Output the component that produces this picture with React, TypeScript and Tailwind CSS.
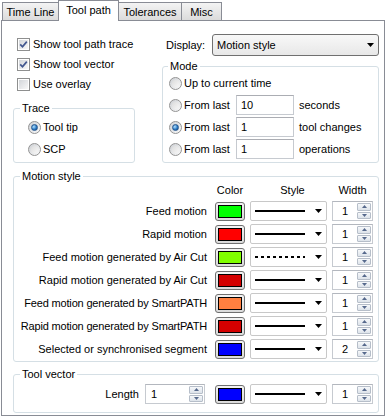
import React from 'react'

const rows = [
  { label: 'Feed motion', swatch: 'bg-[#00ff00]', dashed: false, width: '1', tight: false },
  { label: 'Rapid motion', swatch: 'bg-[#ff0000]', dashed: false, width: '1', tight: false },
  { label: 'Feed motion generated by Air Cut', swatch: 'bg-[#80ff00]', dashed: true, width: '1', tight: false },
  { label: 'Rapid motion generated by Air Cut', swatch: 'bg-[#d40000]', dashed: false, width: '1', tight: false },
  { label: 'Feed motion generated by SmartPATH', swatch: 'bg-[#ff8040]', dashed: false, width: '1', tight: true },
  { label: 'Rapid motion generated by SmartPATH', swatch: 'bg-[#d40000]', dashed: false, width: '1', tight: true },
  { label: 'Selected or synchronised segment', swatch: 'bg-[#0000ff]', dashed: false, width: '2', tight: false },
]

function Arrow() {
  return (
    <svg width="7" height="4" viewBox="0 0 7 4" className="ml-auto">
      <path d="M0 0h7L3.5 4z" fill="#000" />
    </svg>
  )
}

function Check({ checked }: { checked?: boolean }) {
  return (
    <span className="flex h-[13px] w-[13px] shrink-0 border border-[#8e8f8f] bg-white p-[1px]">
      <span className="flex h-full w-full items-center justify-center bg-linear-to-br from-[#d3d6da] to-[#f8f8f8]">
        {checked && (
          <svg width="9" height="9" viewBox="0 0 9 9">
            <path d="M1.2 4.4L3.5 6.8L7.8 1.6" fill="none" stroke="#42578f" strokeWidth="1.7" />
          </svg>
        )}
      </span>
    </span>
  )
}

function Radio({ on }: { on?: boolean }) {
  return (
    <span className="flex h-[13px] w-[13px] shrink-0 items-center justify-center rounded-full border border-[#939393] bg-linear-to-br from-[#cdd0d4] to-[#fbfbfb]">
      {on ? (
        <span className="h-[7px] w-[7px] rounded-full border border-[#25578f] bg-[radial-gradient(circle_at_35%_35%,#b4e2ff,#2c7cc6_55%,#113c73)]" />
      ) : (
        <span className="h-[7px] w-[7px] rounded-full bg-linear-to-br from-[#dcdcdc] to-[#f7f7f7]" />
      )}
    </span>
  )
}

function SpinBtn({ up }: { up?: boolean }) {
  return (
    <span className="flex flex-1 items-center justify-center rounded-[1px] border border-[#b6bec9] bg-linear-to-b from-[#f6f8fa] to-[#dde3ea]">
      <svg width="5" height="3" viewBox="0 0 5 3">
        <path d={up ? 'M0 3h5L2.5 0z' : 'M0 0h5L2.5 3z'} fill="#56698c" />
      </svg>
    </span>
  )
}

function Spin({ value, left }: { value: string; left?: boolean }) {
  return (
    <div className="flex h-[20px] w-full border border-[#c6cad0] border-t-[#b3b7be] bg-white">
      <div className={left ? 'flex flex-1 items-center pl-[5px]' : 'flex flex-1 items-center justify-center'}>{value}</div>
      <div className="mr-[1px] flex w-[14px] flex-col gap-[1px] py-[1px]">
        <SpinBtn up />
        <SpinBtn />
      </div>
    </div>
  )
}

function ColorBtn({ swatch }: { swatch: string }) {
  return (
    <div className="flex h-[19px] rounded-[3px] border border-[#707070] bg-linear-to-b from-[#f3f3f3] to-[#dadada] p-[2px]">
      <div className={'h-full w-full border border-black ' + swatch} />
    </div>
  )
}

function StyleCombo({ dashed }: { dashed?: boolean }) {
  return (
    <div className="flex h-[20px] items-center rounded-[2px] border border-[#c8c8c8] bg-white px-[4px]">
      <svg width="50" height="2" viewBox="0 0 50 2">
        <line x1="0" y1="1" x2="50" y2="1" stroke="#000" strokeWidth="2" strokeDasharray={dashed ? '3 3' : undefined} />
      </svg>
      <Arrow />
    </div>
  )
}

function TextBox({ value }: { value: string }) {
  return (
    <div className="flex h-[20px] w-[58px] items-center border border-[#c6cad0] border-t-[#abadb3] bg-white pl-[4px]">
      {value}
    </div>
  )
}

export default function App() {
  return (
    <div className="h-[418px] w-[386px] overflow-hidden bg-white font-['Liberation_Sans',Arial,sans-serif] text-[11px] leading-[13px] text-black">
      <div className="flex h-[20px] items-end pl-[2px]">
        <div className="flex h-[18px] w-[57px] items-center justify-center border border-b-0 border-[#898c95] bg-linear-to-b from-[#f4f4f4] to-[#dbdbdb] pt-[1px]">
          Time Line
        </div>
        <div className="relative z-10 -mb-px -ml-px flex h-[21px] w-[61px] items-center justify-center border border-b-0 border-[#898c95] bg-white pb-[2px]">
          Tool path
        </div>
        <div className="-ml-px flex h-[18px] w-[64px] items-center justify-center border border-b-0 border-[#898c95] bg-linear-to-b from-[#f4f4f4] to-[#dbdbdb] pt-[1px]">
          Tolerances
        </div>
        <div className="-ml-px flex h-[18px] w-[41px] items-center justify-center border border-b-0 border-[#898c95] bg-linear-to-b from-[#f4f4f4] to-[#dbdbdb] pt-[1px]">
          Misc
        </div>
      </div>

      <div className="ml-px box-border h-[396px] w-[384px] border border-[#898c95] bg-white pl-[11px] pr-[5px] pt-[13px]">
        <div className="flex items-start gap-[27px]">
          {/* left column */}
          <div className="w-[122px]">
            <div className="flex h-[20px] items-center gap-[3px] pl-[4px]">
              <Check checked />
              <span>Show tool path trace</span>
            </div>
            <div className="flex h-[20px] items-center gap-[3px] pl-[4px]">
              <Check checked />
              <span>Show tool vector</span>
            </div>
            <div className="flex h-[20px] items-center gap-[3px] pl-[4px]">
              <Check />
              <span>Use overlay</span>
            </div>
            <fieldset className="mt-[8px] rounded-[3px] border border-[#d5dfe5] pb-[2px] pl-[6px]">
              <legend className="px-[2px] leading-[13px]">Trace</legend>
              <div className="pl-[8px] pt-[1px]">
                <div className="flex h-[22px] items-center gap-[2px]">
                  <Radio on />
                  <span>Tool tip</span>
                </div>
                <div className="flex h-[22px] items-center gap-[2px]">
                  <Radio />
                  <span>SCP</span>
                </div>
              </div>
            </fieldset>
          </div>

          {/* right column */}
          <div className="flex-1">
            <div className="flex h-[22px] items-center">
              <span className="pl-[4px]">Display:</span>
              <div className="ml-auto flex h-[22px] w-[167px] items-center rounded-[3px] border border-[#707070] bg-linear-to-b from-[#f8f8f8] to-[#e8e8e8] pl-[4px] pr-[4px]">
                <span>Motion style</span>
                <Arrow />
              </div>
            </div>
            <fieldset className="mt-[4px] rounded-[3px] border border-[#d5dfe5] pb-[3px] pl-[5px]">
              <legend className="px-[2px] leading-[13px]">Mode</legend>
              <div className="flex flex-col gap-[2px] pl-[1px]">
                <div className="flex h-[20px] items-center gap-[2px]">
                  <Radio />
                  <span>Up to current time</span>
                </div>
                <div className="flex h-[20px] items-center">
                  <div className="flex w-[67px] items-center gap-[2px]">
                    <Radio />
                    <span>From last</span>
                  </div>
                  <TextBox value="10" />
                  <span className="ml-[5px]">seconds</span>
                </div>
                <div className="flex h-[20px] items-center">
                  <div className="flex w-[67px] items-center gap-[2px]">
                    <Radio on />
                    <span>From last</span>
                  </div>
                  <TextBox value="1" />
                  <span className="ml-[5px]">tool changes</span>
                </div>
                <div className="flex h-[20px] items-center">
                  <div className="flex w-[67px] items-center gap-[2px]">
                    <Radio />
                    <span>From last</span>
                  </div>
                  <TextBox value="1" />
                  <span className="ml-[5px]">operations</span>
                </div>
              </div>
            </fieldset>
          </div>
        </div>

        <fieldset className="mt-[7px] rounded-[3px] border border-[#d5dfe5] pb-[2px] pl-[6px] pr-[5px]">
          <legend className="px-[2px] leading-[13px]">Motion style</legend>
          <div className="grid grid-cols-[1fr_30px_77px_41px] items-center gap-x-[5px] gap-y-[3px]">
            <div className="h-[15px]" />
            <div className="flex h-[15px] items-center justify-center">Color</div>
            <div className="flex h-[15px] items-center justify-center pl-[8px]">Style</div>
            <div className="flex h-[15px] items-center justify-center">Width</div>
            {rows.map((r) => (
              <React.Fragment key={r.label}>
                <div className={'flex h-[20px] items-center justify-end whitespace-nowrap pr-[3px]' + (r.tight ? ' tracking-[-0.17px]' : '')}>
                  {r.label}
                </div>
                <ColorBtn swatch={r.swatch} />
                <StyleCombo dashed={r.dashed} />
                <Spin value={r.width} />
              </React.Fragment>
            ))}
          </div>
        </fieldset>

        <fieldset className="mt-[6px] rounded-[3px] border border-[#d5dfe5] pb-[8px] pl-[6px] pr-[5px]">
          <legend className="px-[2px] leading-[13px]">Tool vector</legend>
          <div className="grid grid-cols-[1fr_30px_77px_41px] items-center gap-x-[5px] pt-[3px]">
            <div className="flex h-[20px] items-center justify-end gap-[6px] pr-[5px]">
              <span>Length</span>
              <div className="w-[60px]">
                <Spin value="1" left />
              </div>
            </div>
            <ColorBtn swatch="bg-[#0000ff]" />
            <StyleCombo />
            <Spin value="1" />
          </div>
        </fieldset>
      </div>
    </div>
  )
}
